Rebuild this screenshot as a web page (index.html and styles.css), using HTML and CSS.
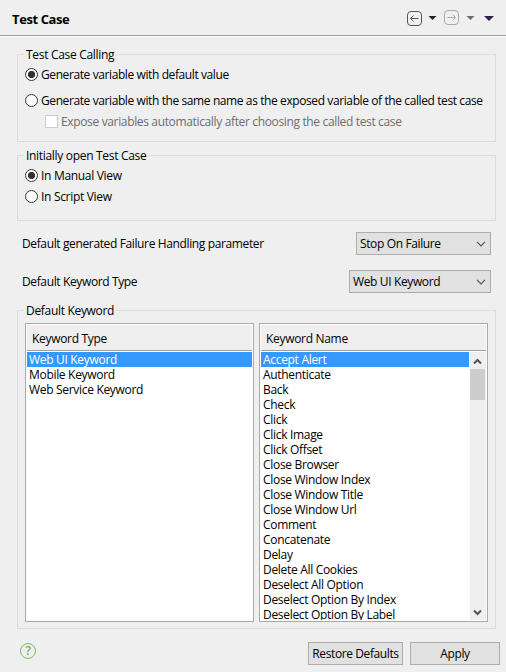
FILE: index.html
```html
<!DOCTYPE html>
<html lang="en">
<head>
<meta charset="utf-8">
<title>Test Case</title>
<link rel="stylesheet" href="styles.css">
</head>
<body>
<header class="header">
  <h1 class="title">Test Case</h1>
  <svg class="nav" width="92" height="20" viewBox="0 0 92 20">
    <rect x="1.5" y="3.5" width="14" height="14" rx="3.5" fill="none" stroke="#555"/>
    <path d="M12.5 10.5H4.5M7.5 7.5l-3 3 3 3" fill="none" stroke="#555"/>
    <path d="M22.5 8h8l-4 4z" fill="#222"/>
    <rect x="38.500" y="2.500" width="14" height="14" rx="3.500" fill="none" stroke="#aaa"/>
    <path d="M41.500 9.500h8M46.500 6.500l3 3-3 3" fill="none" stroke="#aaa"/>
    <path d="M60.500 8h8l-4 4z" fill="#6c6c72"/>
    <path d="M78 8h10l-5 5z" fill="#32204a"/>
  </svg>
</header>
<main class="page">
  <section class="group calling">
    <h2 class="legend">Test Case Calling</h2>
    <label class="option"><i class="radio on"></i><span>Generate variable with default value</span></label>
    <label class="option second"><i class="radio"></i><span class="long">Generate variable with the same name as the exposed variable of the called test case</span></label>
    <label class="option sub"><i class="check"></i><span>Expose variables automatically after choosing the called test case</span></label>
  </section>
  <section class="group view">
    <h2 class="legend">Initially open Test Case</h2>
    <label class="option"><i class="radio on"></i><span>In Manual View</span></label>
    <label class="option script"><i class="radio"></i><span>In Script View</span></label>
  </section>
  <div class="field">
    <span>Default generated Failure Handling parameter</span>
    <div class="select failure"><span>Stop On Failure</span><svg width="10" height="6" viewBox="0 0 10 6"><path d="M1 .8l4 4 4-4" fill="none" stroke="#555" stroke-width="1.200"/></svg></div>
  </div>
  <div class="field type">
    <span>Default Keyword Type</span>
    <div class="select keyword"><span>Web UI Keyword</span><svg width="10" height="6" viewBox="0 0 10 6"><path d="M1 .8l4 4 4-4" fill="none" stroke="#555" stroke-width="1.200"/></svg></div>
  </div>
  <section class="group defaults">
    <h2 class="legend">Default Keyword</h2>
    <div class="tables">
      <div class="table">
        <div class="thead">Keyword Type</div>
        <ul class="rows">
          <li class="selected">Web UI Keyword</li><li>Mobile Keyword</li><li>Web Service Keyword</li>
        </ul>
      </div>
      <div class="table">
        <div class="thead">Keyword Name</div>
        <div class="scroll">
          <ul class="rows">
            <li class="selected">Accept Alert</li><li>Authenticate</li><li>Back</li><li>Check</li><li>Click</li><li>Click Image</li><li>Click Offset</li><li>Close Browser</li><li>Close Window Index</li><li>Close Window Title</li><li>Close Window Url</li><li>Comment</li><li>Concatenate</li><li>Delay</li><li>Delete All Cookies</li><li>Deselect All Option</li><li>Deselect Option By Index</li><li>Deselect Option By Label</li>
          </ul>
          <div class="bar">
            <svg width="9" height="7" viewBox="0 0 9 7"><path d="M1 5.500l3.500-3.500 3.500 3.500" fill="none" stroke="#555" stroke-width="2"/></svg>
            <div class="thumb"></div>
            <svg class="down" width="9" height="7" viewBox="0 0 9 7"><path d="M1 1.500l3.500 3.500 3.500-3.500" fill="none" stroke="#555" stroke-width="2"/></svg>
          </div>
        </div>
      </div>
    </div>
  </section>
</main>
<footer class="footer">
  <div class="help">?</div>
  <button class="button restore">Restore Defaults</button>
  <button class="button apply">Apply</button>
</footer>
</body>
</html>
```
FILE: styles.css
```css
* { box-sizing: border-box; }
body {
  margin: 0;
  width: 506px;
  height: 672px;
  overflow: hidden;
  background: #efefef;
  color: #000;
  font: 12px/15px "Open Sans", "Noto Sans", sans-serif;
  letter-spacing: -0.31px;
  white-space: nowrap;
}
h1, h2, ul { margin: 0; padding: 0; font: inherit; list-style: none; }
svg { display: block; flex: none; }
.header {
  height: 37px;
  display: flex;
  justify-content: space-between;
  padding: 8px 8px 0 12px;
  border-bottom: 1px solid #fff;
  box-shadow: inset 0 -1px #a0a0a0;
}
.title { font-size: 13px; font-weight: 700; line-height: 22px; letter-spacing: -0.4px; }
.page { padding: 17px 10px 0 17px; }
.group { position: relative; border: 1px solid #dcdcdc; padding: 0 7px; }
.legend {
  position: absolute;
  top: -8px;
  left: 6px;
  padding: 0 2px;
  background: #efefef;
}
.calling { height: 88px; padding-top: 12px; }
.calling .option { letter-spacing: -0.4px; }
.option { display: flex; align-items: center; gap: 3px; height: 15px; }
.second { margin-top: 11px; }
.calling .sub { margin: 6px 0 0 20px; color: #6d6d6d; letter-spacing: -0.35px; }
.radio { width: 13px; height: 13px; border: 1px solid #333; border-radius: 50%; background: #fff; flex: none; }
.on { background: radial-gradient(circle, #333 3.3px, #fff 3.9px); }
.check { width: 13px; height: 13px; border: 1px solid #ccc; background: #fff; flex: none; }
.view { height: 66px; margin-top: 13px; padding-top: 12px; }
.script { margin-top: 6px; }
.field { display: flex; justify-content: space-between; align-items: center; height: 23px; margin-top: 11px; padding: 0 5px; letter-spacing: -0.37px; }
.type { margin-top: 15px; }
.select { display: flex; justify-content: space-between; align-items: center; height: 23px; padding: 0 4px 0 3px; border: 1px solid #adadad; background: #e1e1e1; }
.failure { width: 135px; }
.keyword { width: 142px; }
.defaults { height: 319px; margin-top: 17px; padding-top: 12px; }
.tables { display: grid; grid-template-columns: 229px 229px; gap: 5px; }
.table { height: 299px; border: 1px solid #a8a8ad; padding: 1px; background: #fff; }
.thead { height: 26px; padding: 6px 5px 0; background: #efefef; border-bottom: 1px solid #a0a0a0; }
.table .rows { margin-top: 1px; flex: 1; height: 268px; overflow: hidden; }
.rows li { height: 15px; padding-left: 2px; }
.rows .selected { background: #3399ff; color: #fff; }
.scroll { display: flex; gap: 1px; }
.bar { width: 16px; height: 268px; margin-top: 1px; padding: 6px 1px 4px 0; display: flex; flex-direction: column; align-items: center; background: #efefef; }
.thumb { width: 15px; height: 31px; margin-top: 4px; background: #cdcdcd; }
.down { margin-top: auto; }
.footer { display: flex; gap: 7px; padding: 13px 6px 0 20px; }
.help { width: 16px; height: 16px; margin: 1px auto 0 0; border: 1px solid #78be50; border-radius: 50%; color: #6fb845; font: 600 12px/14px "Open Sans", sans-serif; text-align: center; }
.button { height: 23px; padding: 0; border: 1px solid #adadad; background: #e1e1e1; color: #000; font: inherit; letter-spacing: -0.4px; }
.restore { width: 95px; }
.apply { width: 90px; }
```
